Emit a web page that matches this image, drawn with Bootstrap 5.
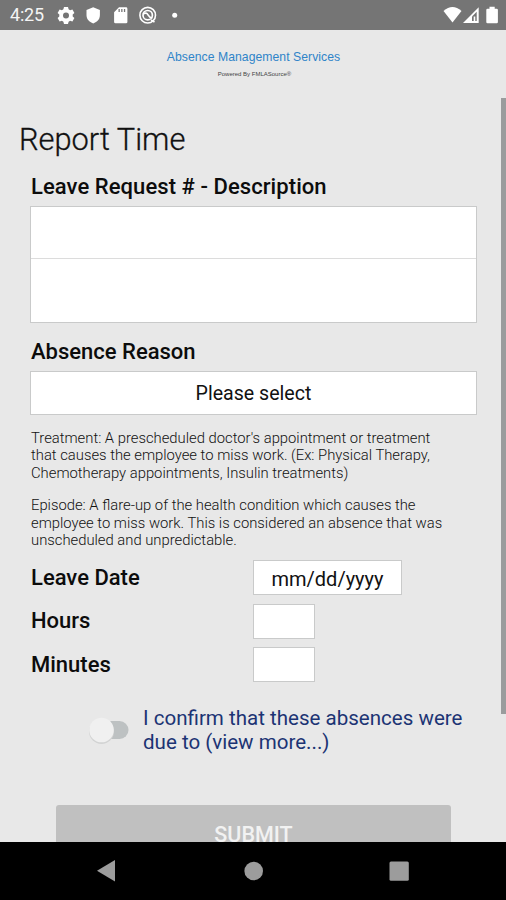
<!DOCTYPE html>
<html lang="en">
<head>
<meta charset="utf-8">
<meta name="viewport" content="width=device-width, initial-scale=1">
<title>Report Time</title>
<link href="https://cdn.jsdelivr.net/npm/bootstrap@5.3.0/dist/css/bootstrap.min.css" rel="stylesheet">
<style>
body{width:506px;height:900px;background:#e8e8e8;color:#111;font-family:Roboto,"Liberation Sans",sans-serif}
.status-bar{height:30px;background:#757575;padding:0 8px 0 10px}
.clock{font-size:18px;line-height:34px;width:46px;color:#f4f4f4;letter-spacing:-.2px}
.screen{height:812px}
.brand-block{padding:19px 0 0 1px;height:87px}
.brand-name{font:12.2px/16px "Liberation Sans",sans-serif;color:#2f84c8;letter-spacing:.05px}
.brand-sub{font:6px/8px "Liberation Sans",sans-serif;color:#444;margin:5px 0 0 2px}
.page-title{font-size:30.8px;line-height:44px;font-weight:300;-webkit-text-stroke:.3px #111;padding:1px 0 0 19px;margin:0}
.form-area{padding:0 29px 0 31px}
.field-label{font-size:22px;line-height:30px;font-weight:500;color:#0c0c0c}
.title-label{margin-top:10px;letter-spacing:.07px}
.box{background:#fff;border:1px solid #c9caca}
.list-box{height:117px;margin:4px 0 0 -1px}
.list-box .cell-top{height:52px;border-bottom:1px solid #dcdcdc}
.reason-label{margin-top:14px}
.reason-box{height:44px;margin:4px 0 0 -1px;font-size:20px}
.reason-box span{font-size:19.6px;padding-top:2px}
.help{font-size:14.8px;line-height:17.3px;font-weight:300;color:#111;margin:15px 0 0;white-space:nowrap}
.help + .help{margin-top:15.5px}
.entry-label{width:222px}
.date-box{width:149px;height:35px;font-size:20px;padding-top:3px}
.num-box{width:62px;height:35px}
.entries{margin-top:11px;gap:8.5px}
.confirm{margin:24px 0 0 57px}
.toggle{width:42px;height:32px}
.confirm-text{font-size:20.55px;line-height:24px;color:#1c3474;margin-left:13px;white-space:nowrap}
.submit{width:395px;height:60px;margin:51px 0 0 56px;background:#c0c0c0;color:#f2f2f2;border-radius:3px;font-size:21.5px;font-weight:500}
.scroll-thumb{width:5px;height:616px;top:68px;right:0;background:#9a9c9d}
.nav-keys{height:58px;background:#000}
</style>
</head>
<body class="overflow-hidden">
<header class="status-bar d-flex align-items-center">
  <span class="clock">4:25</span>
  <svg width="126" height="30" viewBox="56 0 126 30" fill="#fff">
    <path fill-rule="evenodd" d="M64 7h4l.6 2.3 1.5.9 2.300-.7 2 3.500-1.700 1.600v1.800l1.700 1.600-2 3.500-2.300-.7-1.500.9-.6 2.300h-4l-.6-2.300-1.500-.9-2.300.7-2-3.500 1.700-1.600v-1.800l-1.700-1.600 2-3.500 2.300.7 1.500-.9zM66 12.400a3 3 0 1 0 0 6 3 3 0 0 0 0-6z"/>
    <path d="M93.200 7.300l6.700 2.700v5c0 4.200-2.700 7-6.700 8.400-4-1.400-6.700-4.200-6.700-8.400v-5z"/>
    <path fill-rule="evenodd" d="M119 7.300h7q1.400 0 1.400 1.400v13.200q0 1.400-1.400 1.400h-10.500q-1.400 0-1.400-1.400v-9.700zM118.500 9v3h1.300V9zm2.700 0v3h1.300V9zm2.700 0v3h1.300V9z"/>
    <g fill="none" stroke="#fff"><circle cx="147.700" cy="15.200" r="7.800" stroke-width="1.600"/><circle cx="147.700" cy="15.200" r="4.700" stroke-width="1.700"/><path d="M143 14q3.500-2 5 .8t4.500 3.200M151 20l3.500 2" stroke-width="1.700"/></g>
    <circle cx="174.700" cy="15.200" r="2.500"/>
  </svg>
  <svg class="ms-auto" width="58" height="30" viewBox="440 0 58 30" fill="#fff">
    <path d="M443.500 11q9-8 18 0l-9 11.500z"/>
    <path d="M478.700 7.300v15.700H463z"/><path d="M472 16.500l4.700-4.700V21H472z" fill="#757575"/><path d="M473.700 16.500h1.600v4.500h-1.600z"/>
    <path d="M489.500 6.800h5.200v2h2q1.200 0 1.200 1.200v12q0 1.300-1.200 1.300h-9.200q-1.200 0-1.200-1.300V10q0-1.200 1.200-1.200h2z"/>
  </svg>
</header>
<main class="screen position-relative overflow-hidden">
  <div class="brand-block text-center">
    <div class="brand-name">Absence Management Services</div>
    <div class="brand-sub">Powered By FMLASource®</div>
  </div>
  <h1 class="page-title">Report Time</h1>
  <div class="form-area">
    <div class="field-label title-label">Leave Request # - Description</div>
    <div class="box list-box"><div class="cell-top"></div></div>
    <div class="field-label reason-label">Absence Reason</div>
    <div class="box reason-box d-flex align-items-center justify-content-center"><span>Please select</span></div>
    <p class="help">Treatment: A prescheduled doctor's appointment or treatment<br>that causes the employee to miss work. (Ex: Physical Therapy,<br>Chemotherapy appointments, Insulin treatments)</p>
    <p class="help">Episode: A flare-up of the health condition which causes the<br>employee to miss work. This is considered an absence that was<br>unscheduled and unpredictable.</p>
    <div class="entries d-flex flex-column">
      <div class="d-flex align-items-center"><div class="field-label entry-label">Leave Date</div><div class="box date-box d-flex align-items-center justify-content-center"><span>mm/dd/yyyy</span></div></div>
      <div class="d-flex align-items-center"><div class="field-label entry-label">Hours</div><div class="box num-box"></div></div>
      <div class="d-flex align-items-center"><div class="field-label entry-label">Minutes</div><div class="box num-box"></div></div>
    </div>
    <div class="confirm d-flex align-items-center">
      <svg class="toggle" viewBox="88 713 42 32"><rect x="92" y="720" width="36.500" height="18" rx="9" fill="#bdc1c2"/><circle cx="101.500" cy="730.500" r="12.500" fill="#d2d3d3"/><circle cx="101.500" cy="729" r="12.300" fill="#f0f0f0"/></svg>
      <div class="confirm-text"><span>I confirm that these absences were</span><br><span>due to (view more...)</span></div>
    </div>
  </div>
  <div class="submit d-flex align-items-center justify-content-center"><span>SUBMIT</span></div>
  <div class="scroll-thumb position-absolute"></div>
</main>
<footer class="nav-keys">
  <svg class="d-block" width="506" height="58" viewBox="0 842 506 58" fill="#9c9c9c"><path d="M97 870.700l18-10.700v21.500z"/><circle cx="253.700" cy="871" r="9.300"/><rect x="389.500" y="861.500" width="19.300" height="19.300" rx="1.500"/></svg>
</footer>
<script src="https://cdn.jsdelivr.net/npm/bootstrap@5.3.0/dist/js/bootstrap.bundle.min.js"></script>
</body>
</html>
